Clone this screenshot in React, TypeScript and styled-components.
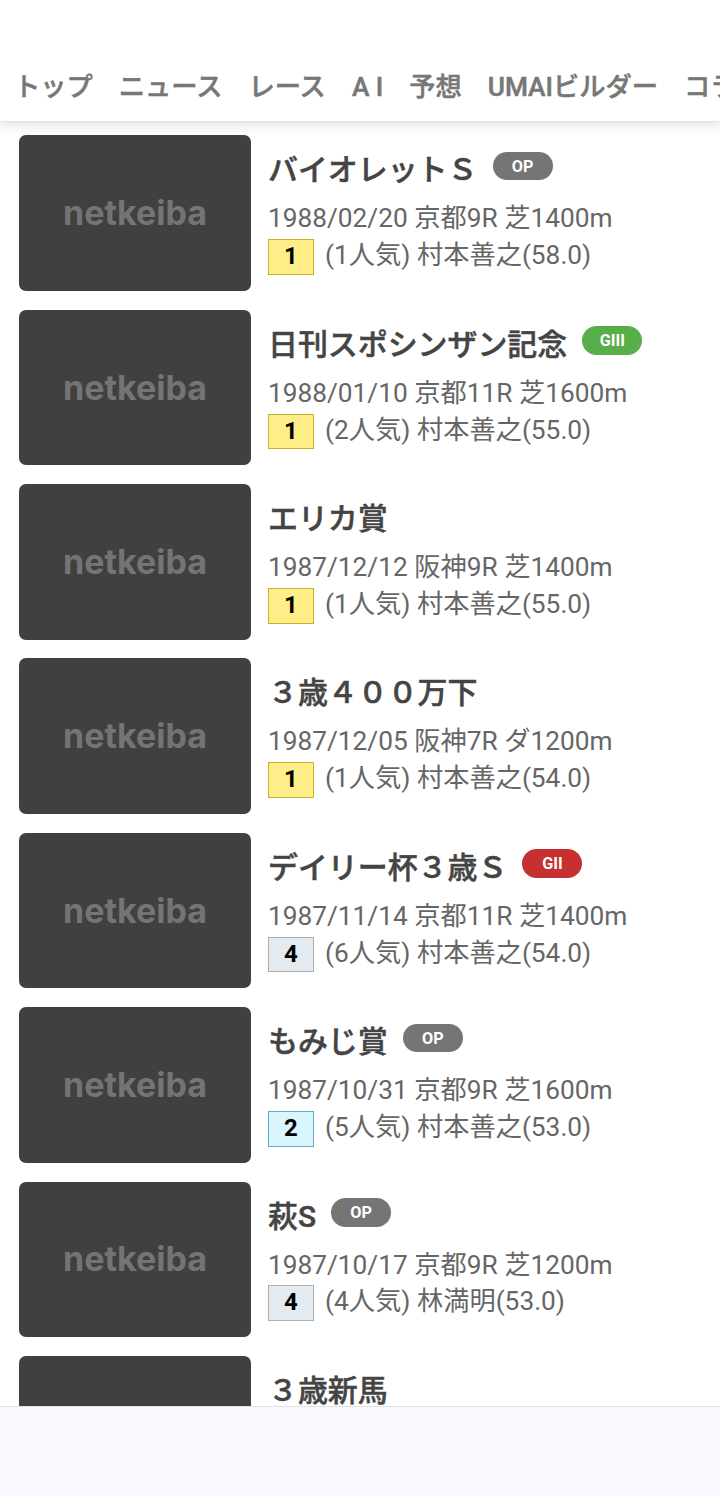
import React from 'react';
import styled, { createGlobalStyle } from 'styled-components';

const GlobalStyle = createGlobalStyle`
  * { box-sizing: border-box; }
  html, body { margin: 0; padding: 0; background: #fff; }
  body { font-family: Roboto, "Noto Sans CJK JP", sans-serif; overflow: hidden; }
`;

const Page = styled.div`
  display: flex;
  flex-direction: column;
  width: 720px;
  height: 1496px;
  overflow: hidden;
  background: #fff;
`;

const Header = styled.header`
  position: relative;
  z-index: 1;
  flex: none;
  height: 121px;
  padding-top: 50px;
  background: #fff;
  box-shadow: 0 0 1px rgba(0, 0, 0, 0.14), 0 4px 12px rgba(0, 0, 0, 0.13);
`;

const Nav = styled.nav`
  display: flex;
  gap: 26px;
  height: 71px;
  padding-left: 14px;
  overflow: hidden;
  white-space: nowrap;
`;

const NavItem = styled.a`
  flex: none;
  font-size: 26.25px;
  font-weight: 500;
  line-height: 75px;
  color: #777;
  -webkit-text-stroke: 0.5px #777;
`;

const List = styled.main`
  flex: 1;
  min-height: 0;
  overflow: hidden;
  padding: 14.4px 19px 0;
`;

const Race = styled.article`
  display: flex;
  gap: 17px;
  height: 155.5px;
  margin-bottom: 18.86px;
`;

const Thumbnail = styled.div`
  display: flex;
  align-items: center;
  justify-content: center;
  flex: none;
  width: 232px;
  height: 100%;
  border-radius: 7px;
  background: #404040;
`;

const Wordmark = styled.span`
  font-family: Inter, sans-serif;
  font-size: 34px;
  font-weight: 700;
  line-height: 40px;
  color: #747474;
`;

const Details = styled.div`
  flex: 1;
  min-width: 0;
  padding-top: 12px;
  white-space: nowrap;
`;

const TitleRow = styled.div`
  display: flex;
  align-items: flex-start;
  gap: 15.1px;
  height: 52px;
`;

const Title = styled.h2`
  margin: 0;
  font-size: 29.93px;
  font-weight: 500;
  line-height: 46px;
  color: #444;
  -webkit-text-stroke: 0.5px #444;
`;

const Grade = styled.span<{ $color: string }>`
  width: 60px;
  height: 28.5px;
  margin-top: 4.5px;
  border-radius: 15px;
  background: ${({ $color }) => $color};
  color: #fff;
  font-size: 16.2px;
  font-weight: 700;
  line-height: 29.4px;
  text-align: center;
`;

const Info = styled.p`
  display: flex;
  align-items: flex-start;
  height: 36.9px;
  margin: 0;
  font-size: 26.25px;
  line-height: 39.2px;
  color: #666;
`;

const Rank = styled.span<{ $bg: string; $border: string }>`
  width: 46px;
  height: 35.5px;
  margin: 3px 11px 0 0;
  border: 1px solid ${({ $border }) => $border};
  background: ${({ $bg }) => $bg};
  color: #000;
  font-size: 24px;
  font-weight: 700;
  line-height: 33px;
  text-align: center;
`;

const BottomBar = styled.footer`
  flex: none;
  height: 90px;
  border-top: 1px solid #e0e0e6;
  background: #f8f8ff;
`;

const navItems = ['トップ', 'ニュース', 'レース', 'A I', '予想', 'UMAIビルダー', 'コラム'];

const gradeColors: Record<string, string> = {
  OP: '#757575',
  GIII: '#58af4a',
  GII: '#c73030',
};

const rankColors: Record<number, { bg: string; border: string }> = {
  1: { bg: '#ffee88', border: '#c9b22b' },
  2: { bg: '#d9f6ff', border: '#65acc3' },
  4: { bg: '#e3eaf0', border: '#adb1b5' },
};

interface RaceResult {
  title: string;
  grade?: string;
  course: string;
  rank: number;
  jockey: string;
}

const races: RaceResult[] = [
  { title: 'バイオレットＳ', grade: 'OP', course: '1988/02/20 京都9R 芝1400m', rank: 1, jockey: '(1人気) 村本善之(58.0)' },
  { title: '日刊スポシンザン記念', grade: 'GIII', course: '1988/01/10 京都11R 芝1600m', rank: 1, jockey: '(2人気) 村本善之(55.0)' },
  { title: 'エリカ賞', course: '1987/12/12 阪神9R 芝1400m', rank: 1, jockey: '(1人気) 村本善之(55.0)' },
  { title: '３歳４００万下', course: '1987/12/05 阪神7R ダ1200m', rank: 1, jockey: '(1人気) 村本善之(54.0)' },
  { title: 'デイリー杯３歳Ｓ', grade: 'GII', course: '1987/11/14 京都11R 芝1400m', rank: 4, jockey: '(6人気) 村本善之(54.0)' },
  { title: 'もみじ賞', grade: 'OP', course: '1987/10/31 京都9R 芝1600m', rank: 2, jockey: '(5人気) 村本善之(53.0)' },
  { title: '萩S', grade: 'OP', course: '1987/10/17 京都9R 芝1200m', rank: 4, jockey: '(4人気) 林満明(53.0)' },
];

export default function App() {
  return (
    <Page lang="ja">
      <GlobalStyle />
      <Header>
        <Nav>
          {navItems.map((item) => (
            <NavItem key={item}>{item}</NavItem>
          ))}
        </Nav>
      </Header>
      <List>
        {races.map((race) => (
          <Race key={race.course}>
            <Thumbnail>
              <Wordmark>netkeiba</Wordmark>
            </Thumbnail>
            <Details>
              <TitleRow>
                <Title>{race.title}</Title>
                {race.grade && <Grade $color={gradeColors[race.grade]}>{race.grade}</Grade>}
              </TitleRow>
              <Info>{race.course}</Info>
              <Info>
                <Rank $bg={rankColors[race.rank].bg} $border={rankColors[race.rank].border}>
                  {race.rank}
                </Rank>
                {race.jockey}
              </Info>
            </Details>
          </Race>
        ))}
        <Race>
          <Thumbnail />
          <Details>
            <TitleRow>
              <Title>３歳新馬</Title>
            </TitleRow>
          </Details>
        </Race>
      </List>
      <BottomBar />
    </Page>
  );
}
